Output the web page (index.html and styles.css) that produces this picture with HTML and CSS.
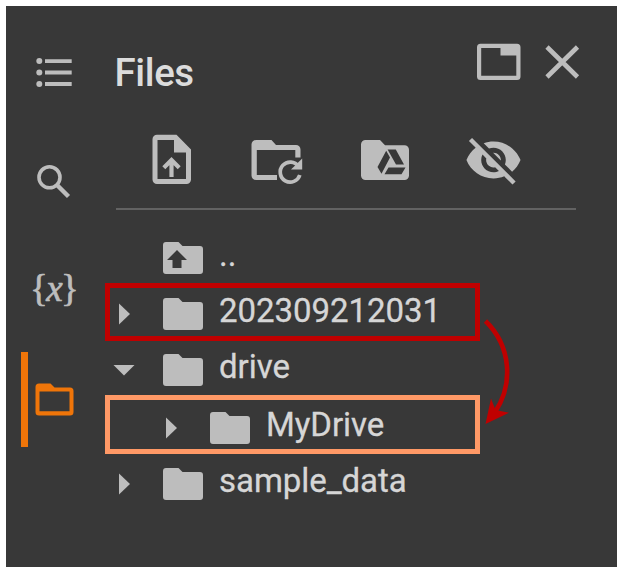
FILE: index.html
```
<!DOCTYPE html>
<html lang="en">
<head>
<meta charset="utf-8">
<title>Files</title>
<link rel="stylesheet" href="styles.css">
</head>
<body>
<svg class="defs" width="0" height="0">
  <symbol id="folder" viewBox="0 0 40 32"><path d="M3 0H15.500L19.500 4H37a3 3 0 0 1 3 3V29a3 3 0 0 1-3 3H3a3 3 0 0 1-3-3V3a3 3 0 0 1 3-3Z"/></symbol>
  <symbol id="right" viewBox="0 0 22 22"><path d="M6 .5 17 11 6 21.500Z"/></symbol>
  <symbol id="down" viewBox="0 0 22 22"><path d="M.5 6H21.500L11 16.500Z"/></symbol>
</svg>
<div class="panel">
  <nav class="rail">
    <div class="slot">
      <svg width="44" height="44" viewBox="32 50 44 44"><circle cx="39.300" cy="61" r="3"/><circle cx="39.300" cy="72.500" r="3"/><circle cx="39.300" cy="84" r="3"/><path d="M45 59.200h26.700v3.800H45zM45 70.600h26.700v3.800H45zM45 82.100h26.700v3.800H45z"/></svg>
    </div>
    <div class="slot">
      <svg class="line" width="44" height="44" viewBox="32 159 44 44"><circle cx="49.500" cy="177.300" r="10.500" stroke-width="3.600"/><path d="M57 185 68.500 196.500" stroke-width="4.400"/></svg>
    </div>
    <div class="slot vars">{<i>x</i>}</div>
    <div class="slot active">
      <svg width="44" height="44" viewBox="32 377 44 44"><path fill-rule="evenodd" d="M39 383.500H50.500L54.500 387.500H70a3.500 3.500 0 0 1 3.500 3.500V412a3.500 3.500 0 0 1-3.500 3.500H39a3.500 3.500 0 0 1-3.500-3.500V387a3.500 3.500 0 0 1 3.500-3.500ZM39.500 391.500V411.200H69.500V391.500Z"/></svg>
    </div>
  </nav>
  <main class="main">
    <header class="head">
      <h1>Files</h1>
      <div class="window-actions">
        <svg width="44" height="38" viewBox="477 43 44 38"><path fill-rule="evenodd" d="M480.500 43.700H517a3.500 3.500 0 0 1 3.500 3.500V76.500a3.500 3.500 0 0 1-3.500 3.500H480.500a3.500 3.500 0 0 1-3.500-3.500V47.200a3.500 3.500 0 0 1 3.500-3.500ZM481.200 48V75.700H516.300V55.500H500.500V48Z"/></svg>
        <svg class="line" width="36" height="38" viewBox="544 43 36 38"><path d="M547 47 577.500 77M577.500 47 547 77" stroke-width="4.600"/></svg>
      </div>
    </header>
    <div class="toolbar">
      <svg width="40" height="60" viewBox="152 130 40 60"><path fill-rule="evenodd" d="M157 134.700H176.500L191 149.500V179.500a4.500 4.500 0 0 1-4.500 4.500H157a4.500 4.500 0 0 1-4.500-4.500V139.200a4.500 4.500 0 0 1 4.500-4.500ZM157.500 140V179H186V152.500H174V140Z"/><path class="stroke" d="M171.500 177V160.500M163.800 167.700 171.500 160 179.200 167.700" stroke-width="4.200"/></svg>
      <svg width="52" height="60" viewBox="251 130 52 60"><path d="M256 140H271.500L276 145H296a4.500 4.500 0 0 1 4.500 4.500V157.500H295.300V150H256.800V175H277V180H256a4.500 4.500 0 0 1-4.500-4.500V144.500a4.500 4.500 0 0 1 4.500-4.500Z"/><path class="stroke" d="M298.500 166.500A10 10 0 1 0 299.800 175" stroke-width="3.700"/><path d="M302.200 158.500V169.500H291Z"/></svg>
      <svg width="48" height="60" viewBox="361 130 48 60"><path d="M365.500 140H380L385 145.200H404.500a4.500 4.500 0 0 1 4.500 4.500V175.500a4.500 4.500 0 0 1-4.500 4.500H365.500a4.500 4.500 0 0 1-4.500-4.500V144.500a4.500 4.500 0 0 1 4.500-4.500Z"/><path class="cut" d="M386.200 150.800 390 157.500 381.500 173.800 377.500 167ZM387.600 149.500H395.800L404 164.500H396ZM388.500 167.500H405.500L401.500 174.300H384.500Z"/></svg>
      <svg width="59" height="60" viewBox="0 -.2 24 24.400"><path d="M12 7c2.760 0 5 2.240 5 5 0 .65-.13 1.260-.36 1.830l2.920 2.920c1.510-1.260 2.700-2.890 3.430-4.750-1.730-4.390-6-7.500-11-7.500-1.400 0-2.740.25-3.980.7l2.160 2.160C10.740 7.130 11.350 7 12 7zM2 4.270l2.280 2.280.46.46C3.080 8.300 1.780 10.020 1 12c1.730 4.390 6 7.500 11 7.500 1.550 0 3.030-.3 4.380-.84l.42.42L19.730 22 21 20.730 3.270 3 2 4.270zM7.530 9.800l1.550 1.550c-.05.21-.08.43-.08.65 0 1.660 1.340 3 3 3 .22 0 .44-.03.65-.08l1.550 1.550c-.67.33-1.410.53-2.200.53-2.760 0-5-2.240-5-5 0-.79.2-1.530.53-2.200zm4.310-.78l3.150 3.150.02-.16c0-1.660-1.340-3-3-3l-.17.01z"/></svg>
    </div>
    <ul class="tree">
      <li><span class="caret"></span><svg class="folder" viewBox="0 0 40 32"><use href="#folder"/><path class="cut" d="M14 8 24 18H18.500V26H9.500V18H4Z"/></svg><span class="name">..</span></li>
      <li><svg class="caret"><use href="#right"/></svg><svg class="folder"><use href="#folder"/></svg><span class="name">202309212031</span></li>
      <li><svg class="caret"><use href="#down"/></svg><svg class="folder"><use href="#folder"/></svg><span class="name">drive</span></li>
      <li class="nested"><svg class="caret"><use href="#right"/></svg><svg class="folder"><use href="#folder"/></svg><span class="name">MyDrive</span></li>
      <li><svg class="caret"><use href="#right"/></svg><svg class="folder"><use href="#folder"/></svg><span class="name">sample_data</span></li>
    </ul>
  </main>
  <div class="mark mark-source"></div>
  <div class="mark mark-target"></div>
  <svg class="arrow" width="34" height="114" viewBox="482 315 34 114"><path class="curve" d="M485.500 321C511 346 514 384 494.500 413"/><path class="tip" d="M485.500 424 491 398.500 495.500 410 509 412.800Z"/></svg>
</div>
</body>
</html>
```
FILE: styles.css
```
* { box-sizing: border-box; }
body { margin: 0; padding: 6px; background: #fff; font-family: Roboto, "Liberation Sans", sans-serif; }
svg { display: block; flex: none; fill: #bdbdbd; }
.defs { position: absolute; }
.line, .stroke { fill: none; stroke: #bdbdbd; }
.cut { fill: #383838; }
.panel { position: relative; display: flex; width: 611px; height: 561px; background: #383838; }
.rail { width: 110px; padding-top: 11.5px; }
.slot { display: flex; align-items: center; height: 109px; padding-left: 26px; }
.vars { padding: 0 0 3px 24px; font: 37px/1 "Liberation Serif", serif; color: #bdbdbd; letter-spacing: -1.6px; -webkit-text-stroke: .7px #bdbdbd; }
.active { height: 95px; margin-top: 7.5px; margin-left: 15px; padding: 0 0 1px 4px; border-left: 7px solid #ef7509; }
.active svg { fill: #ef7509; }
.main { width: 460px; }
.head { display: flex; justify-content: space-between; align-items: flex-start; height: 124px; padding-top: 37px; }
h1 { margin: 8px 0 0 -1.5px; font-size: 38.5px; line-height: 44px; font-weight: 500; letter-spacing: -.4px; color: #dcdcdc; }
.window-actions { display: flex; gap: 23px; margin-right: -4px; }
.toolbar { display: flex; height: 80px; padding: 0 0 0 36px; gap: 59px; border-bottom: 2px solid #626262; }
.toolbar svg:nth-child(3) { margin-left: -1px; }
.toolbar svg:nth-child(4) { margin-left: -4px; }
.tree { margin: 19.5px 0 0; padding: 0; list-style: none; }
.tree li { display: flex; align-items: center; height: 56px; font-size: 33px; line-height: 56px; letter-spacing: -.05px; color: #d6d6d6; }
.tree .nested { padding-left: 47px; margin-top: 2px; }
.name { padding-bottom: 6px; line-height: 50px; -webkit-text-stroke: .3px #d6d6d6; }
.caret { width: 22px; height: 22px; margin: 0 28px 0 -3px; }
.folder { width: 40px; height: 32px; margin-right: 16px; }
.mark { position: absolute; left: 99px; width: 375px; border: 5px solid #c00000; }
.mark-source { top: 277px; height: 58px; }
.mark-target { top: 389px; height: 59px; border-color: #ff9966; }
.arrow { position: absolute; left: 476px; top: 309px; }
.curve { fill: none; stroke: #c00000; stroke-width: 4.6; }
.tip { fill: #c00000; }
```
